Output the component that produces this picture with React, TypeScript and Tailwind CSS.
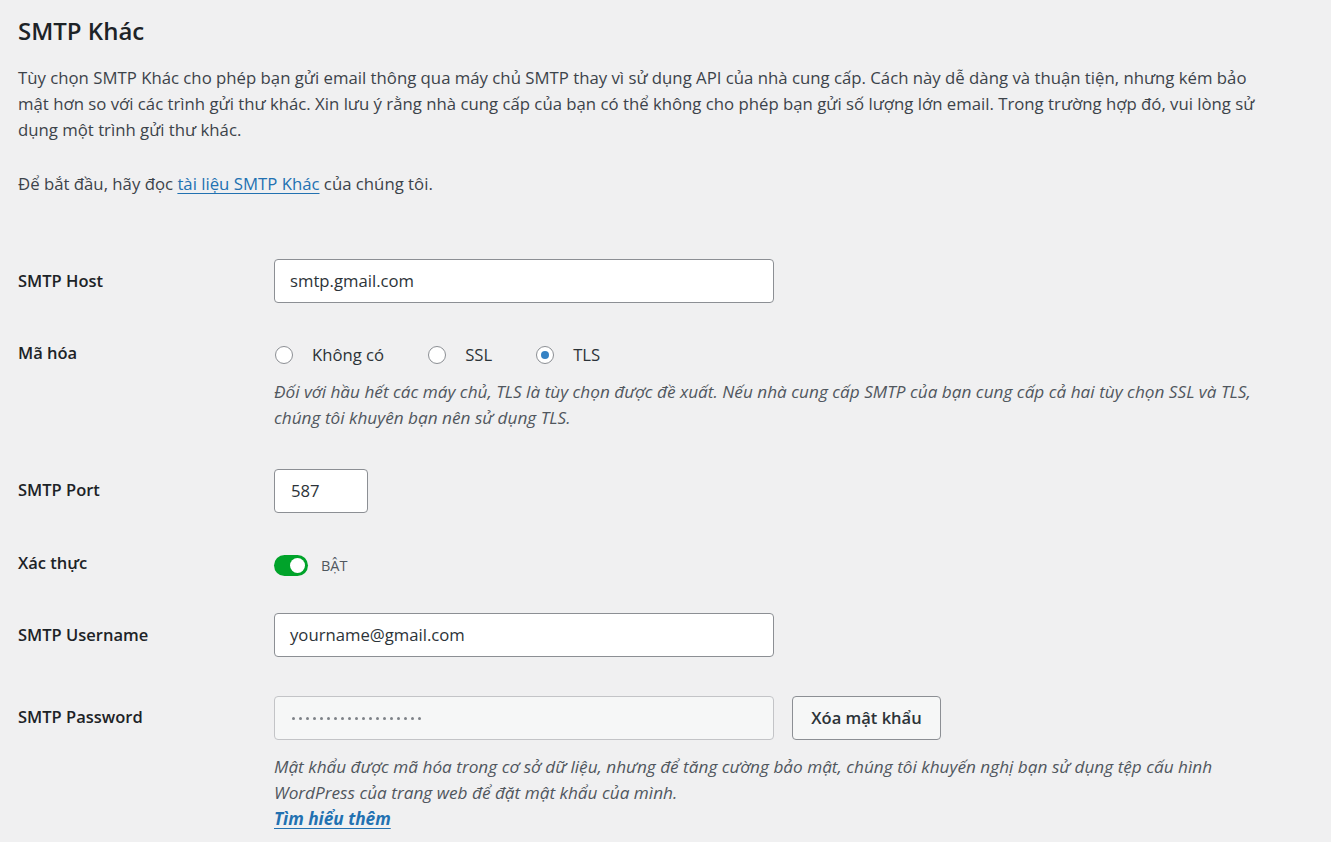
import React from 'react';

const labelCls = 'w-[256px] shrink-0 text-[16.5px] leading-[24px] font-semibold text-[#1d2327]';
const boxCls =
  'h-[44px] rounded-[4px] border border-[#8c8f94] px-[15px] text-[16.7px] text-[#2c3338] flex items-center';
const descCls = 'text-[17.2px] leading-[26px] italic text-[#50575e] whitespace-nowrap';

const Radio: React.FC<{ label: string; checked?: boolean }> = ({ label, checked }) => (
  <div className="flex items-center gap-[19px]">
    <span className="ml-[1px] w-[18px] h-[18px] rounded-full border border-[#8c8f94] bg-white flex items-center justify-center">
      {checked && <span className="w-[8px] h-[8px] rounded-full bg-[#3582c4]"></span>}
    </span>
    <span className="text-[16.7px] leading-[24px] text-[#2c3338]">{label}</span>
  </div>
);

const App: React.FC = () => {
  return (
    <div className="min-h-[842px] w-full bg-[#f0f0f1] px-[18px] font-['Open_Sans',sans-serif] text-[#3c434a]">
      <h1 className="pt-[15px] text-[24px] leading-[32px] font-semibold text-[#1d2327]">SMTP Khác</h1>

      <p className="mt-[18px] text-[16.75px] leading-[26px] whitespace-nowrap">
        Tùy chọn SMTP Khác cho phép bạn gửi email thông qua máy chủ SMTP thay vì sử dụng API của nhà cung cấp. Cách này dễ dàng và thuận tiện, nhưng kém bảo
        <br />
        mật hơn so với các trình gửi thư khác. Xin lưu ý rằng nhà cung cấp của bạn có thể không cho phép bạn gửi số lượng lớn email. Trong trường hợp đó, vui lòng sử
        <br />
        dụng một trình gửi thư khác.
      </p>
      <p className="mt-[28px] text-[16.75px] leading-[26px]">
        Để bắt đầu, hãy đọc{' '}
        <a href="#" className="text-[#2271b1] underline underline-offset-[3px]">tài liệu SMTP Khác</a>{' '}
        của chúng tôi.
      </p>

      <div className="mt-[47px] flex flex-col">
        {/* SMTP Host */}
        <div className="flex items-start h-[74px]">
          <div className={`${labelCls} pt-[25px]`}>SMTP Host</div>
          <div className="pt-[15px]">
            <div className={`${boxCls} bg-white w-[500px]`}>smtp.gmail.com</div>
          </div>
        </div>

        {/* Encryption */}
        <div className="flex items-start h-[128px]">
          <div className={`${labelCls} pt-[23px]`}>Mã hóa</div>
          <div className="pt-[25px]">
            <div className="flex items-center gap-[43px]">
              <Radio label="Không có" />
              <Radio label="SSL" />
              <Radio label="TLS" checked />
            </div>
            <p className={`${descCls} mt-[12px]`}>
              Đối với hầu hết các máy chủ, TLS là tùy chọn được đề xuất. Nếu nhà cung cấp SMTP của bạn cung cấp cả hai tùy chọn SSL và TLS,
              <br />
              chúng tôi khuyên bạn nên sử dụng TLS.
            </p>
          </div>
        </div>

        {/* Port */}
        <div className="flex items-start h-[82px]">
          <div className={`${labelCls} pt-[32px]`}>SMTP Port</div>
          <div className="pt-[23px]">
            <div className={`${boxCls} bg-white w-[94px] px-[16px]`}>587</div>
          </div>
        </div>

        {/* Auth */}
        <div className="flex items-start h-[70px]">
          <div className={`${labelCls} pt-[23px]`}>Xác thực</div>
          <div className="pt-[27px] flex items-center gap-[13px]">
            <span className="w-[34px] h-[21px] rounded-full bg-[#00a32a] flex items-center justify-end pr-[3px]">
              <span className="w-[15px] h-[15px] rounded-full bg-white"></span>
            </span>
            <span className="text-[14.5px] leading-[20px] text-[#50575e]">BẬT</span>
          </div>
        </div>

        {/* Username */}
        <div className="flex items-start h-[74px]">
          <div className={`${labelCls} pt-[25px]`}>SMTP Username</div>
          <div className="pt-[15px]">
            <div className={`${boxCls} bg-white w-[500px]`}>yourname@gmail.com</div>
          </div>
        </div>

        {/* Password */}
        <div className="flex items-start">
          <div className={`${labelCls} pt-[33px]`}>SMTP Password</div>
          <div className="pt-[24px]">
            <div className="flex items-center gap-[18px]">
              <div className="h-[44px] w-[500px] rounded-[4px] border border-[#c3c4c7] bg-[#f6f7f7] px-[17px] flex items-center gap-[4px]">
                {Array.from({ length: 19 }).map((_, i) => (
                  <span key={i} className="w-[3px] h-[3px] rounded-full bg-[#7e8288]"></span>
                ))}
              </div>
              <button className="h-[44px] w-[149px] rounded-[4px] border border-[#8c8f94] bg-[#f6f7f7] text-[16.5px] font-semibold text-[#2c3338]">
                Xóa mật khẩu
              </button>
            </div>
            <p className={`${descCls} mt-[14px]`}>
              Mật khẩu được mã hóa trong cơ sở dữ liệu, nhưng để tăng cường bảo mật, chúng tôi khuyến nghị bạn sử dụng tệp cấu hình
              <br />
              WordPress của trang web để đặt mật khẩu của mình.
              <br />
              <a href="#" className="font-bold text-[#2271b1] underline underline-offset-[3px]">Tìm hiểu thêm</a>
            </p>
          </div>
        </div>
      </div>
    </div>
  );
};

export default App;
